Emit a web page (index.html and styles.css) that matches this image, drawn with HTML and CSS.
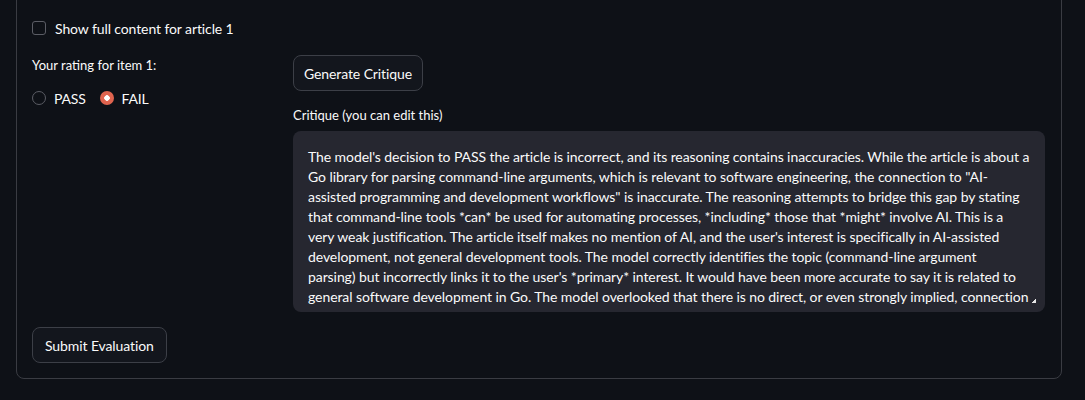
FILE: index.html
```html
<!DOCTYPE html>
<html lang="en">
<head>
<meta charset="utf-8">
<title>Evaluation</title>
<link rel="stylesheet" href="styles.css">
</head>
<body>
<div class="panel">
  <div class="cut-line">Reasoning: the article covers a Go package (pflag) for parsing flags, typically applied in scripting, by programmers who rely on tooling.</div>
  <label class="check-row">
    <span class="checkbox"></span>
    <span class="check-label">Show full content for article 1</span>
  </label>
  <div class="cols">
    <div class="col-left">
      <div class="small-label">Your rating for item 1:</div>
      <div class="radios">
        <div class="radio-opt"><span class="radio"></span><span class="radio-text">PASS</span></div>
        <div class="radio-opt"><span class="radio on"></span><span class="radio-text">FAIL</span></div>
      </div>
    </div>
    <div class="col-right">
      <button class="btn">Generate Critique</button>
      <div class="small-label crit-label">Critique (you can edit this)</div>
      <textarea class="critique" spellcheck="false">The model's decision to PASS the article is incorrect, and its reasoning contains inaccuracies. While the article is about a
Go library for parsing command-line arguments, which is relevant to software engineering, the connection to "AI-
assisted programming and development workflows" is inaccurate. The reasoning attempts to bridge this gap by stating
that command-line tools *can* be used for automating processes, *including* those that *might* involve AI. This is a
very weak justification. The article itself makes no mention of AI, and the user's interest is specifically in AI-assisted
development, not general development tools. The model correctly identifies the topic (command-line argument
parsing) but incorrectly links it to the user's *primary* interest. It would have been more accurate to say it is related to
general software development in Go. The model overlooked that there is no direct, or even strongly implied, connection
to AI-assisted programming, which should have led to a FAIL decision.</textarea>
    </div>
  </div>
  <button class="btn submit">Submit Evaluation</button>
</div>
</body>
</html>
```

FILE: styles.css
```css
html, body {
  margin: 0;
  padding: 0;
  background: #0e1117;
  color: #fafafa;
  font-family: "Lato", "Noto Sans", sans-serif;
  overflow: hidden;
}

.panel {
  box-sizing: border-box;
  width: 1046px;
  margin: -34px 0 0 16px;
  padding: 15px;
  border: 1px solid #3a3c43;
  border-radius: 8px;
}

.cut-line {
  font-size: 14px;
  line-height: 20px;
  height: 20px;
  white-space: nowrap;
  overflow: hidden;
}

.check-row {
  display: flex;
  align-items: center;
  gap: 9px;
  height: 24px;
  margin-top: 14px;
}

.checkbox {
  box-sizing: border-box;
  width: 14px;
  height: 14px;
  border: 1px solid #5b5d65;
  border-radius: 3px;
}

.check-label {
  font-size: 14px;
  letter-spacing: -0.1px;
}

.cols {
  display: grid;
  grid-template-columns: 245px 752px;
  gap: 16px;
  margin-top: 15px;
}

.small-label {
  font-size: 13px;
  line-height: 20px;
}

.radios {
  display: flex;
  gap: 14px;
  margin-top: 12px;
  height: 22px;
  align-items: center;
}

.radio-opt {
  display: flex;
  align-items: center;
  gap: 8px;
}

.radio {
  box-sizing: border-box;
  width: 14px;
  height: 14px;
  border: 1px solid #5b5d65;
  border-radius: 50%;
}

.radio.on {
  border: none;
  background: radial-gradient(circle, #ffffff 0 2.5px, #df644f 3px);
}

.radio-text {
  font-size: 14px;
  letter-spacing: -0.2px;
}

.btn {
  display: block;
  height: 36px;
  padding: 0 10px;
  background: #13161d;
  color: #fafafa;
  border: 1px solid #3c3f47;
  border-radius: 8px;
  font-family: inherit;
  font-size: 14px;
  letter-spacing: -0.1px;
}

.crit-label {
  margin-top: 14px;
}

.critique {
  display: block;
  box-sizing: border-box;
  width: 752px;
  height: 181px;
  margin-top: 6px;
  padding: 16px 7px 16px 15px;
  background: #262730;
  color: #fafafa;
  border: none;
  border-radius: 8px;
  font-family: inherit;
  font-size: 14px;
  line-height: 20px;
  letter-spacing: -0.08px;
  resize: vertical;
  outline: none;
  color-scheme: dark;
}

.critique::-webkit-scrollbar {
  width: 8px;
  height: 8px;
  background: transparent;
}

.critique::-webkit-scrollbar-thumb {
  background: transparent;
}

.critique::-webkit-resizer {
  background: linear-gradient(135deg, transparent 0 55%, #e6e6e6 55%);
  background-size: 5px 5px;
  background-repeat: no-repeat;
  background-position: 1px 1px;
}

.submit {
  margin-top: 15px;
  padding: 0 12px;
}
```
